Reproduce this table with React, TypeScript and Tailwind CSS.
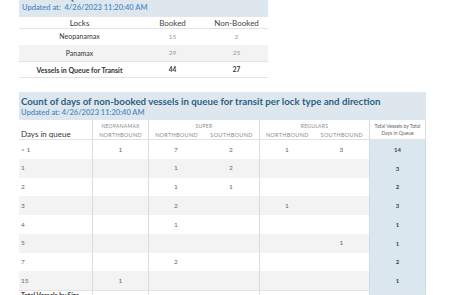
const GROUPS = [
  { label: 'NEOPANAMAX', subs: ['NORTHBOUND'] },
  { label: 'SUPER', subs: ['NORTHBOUND', 'SOUTHBOUND'] },
  { label: 'REGULARS', subs: ['NORTHBOUND', 'SOUTHBOUND'] },
];

// [days, neoNB, superNB, superSB, regNB, regSB, total]
const ROWS: (string | number | null)[][] = [
  ['< 1', 1, 7, 2, 1, 3, 14],
  ['1', null, 1, 2, null, null, 3],
  ['2', null, 1, 1, null, null, 2],
  ['3', null, 2, null, 1, null, 3],
  ['4', null, 1, null, null, null, 1],
  ['5', null, null, null, null, 1, 1],
  ['7', null, 2, null, null, null, 2],
  ['15', 1, null, null, null, null, 1],
];

const COLS = 'grid grid-cols-[73px_56px_55px_56px_55px_55px_57px]';

function LocksTable() {
  return (
    <div className="w-[249px] mt-[-12px]">
      <div className="bg-[#dfe7ee] px-[3px] pt-[2px] pb-[3px]">
        <div className="text-[9.7px] leading-[12px] font-bold text-[#2d5f84] whitespace-nowrap">
          Vessels in Queue for Transit in the Panama Canal
        </div>
        <div className="text-[7.5px] leading-[12px] font-semibold text-[#4a8cc4] whitespace-pre">
          Updated at:  4/26/2023 11:20:40 AM
        </div>
      </div>
      <div className="grid grid-cols-[121px_65px_63px] text-center">
        <div className="h-[12px] leading-[12px] text-[8px] text-[#333] border-b border-[#e3e3e3]">Locks</div>
        <div className="h-[12px] leading-[12px] text-[8px] text-[#444] border-b border-[#e3e3e3]">Booked</div>
        <div className="h-[12px] leading-[12px] text-[8px] text-[#444] border-b border-[#e3e3e3]">Non-Booked</div>

        <div className="h-[16px] leading-[15px] text-[7px] text-[#333]">Neopanamax</div>
        <div className="h-[16px] leading-[15px] text-[6.5px] text-[#999]">15</div>
        <div className="h-[16px] leading-[15px] text-[6.5px] text-[#999]">2</div>

        <div className="h-[16px] leading-[16px] text-[7px] text-[#333] bg-[#f3f3f3]">Panamax</div>
        <div className="h-[16px] leading-[16px] text-[6.5px] text-[#999] bg-[#f3f3f3]">29</div>
        <div className="h-[16px] leading-[16px] text-[6.5px] text-[#999] bg-[#f3f3f3]">25</div>

        <div className="h-[17px] leading-[16px] text-[7px] font-bold text-[#333] border-y border-[#e3e3e3]">
          Vessels in Queue for Transit
        </div>
        <div className="h-[17px] leading-[16px] text-[6.5px] font-bold text-[#333] border-y border-[#e3e3e3]">44</div>
        <div className="h-[17px] leading-[16px] text-[6.5px] font-bold text-[#333] border-y border-[#e3e3e3]">27</div>
      </div>
    </div>
  );
}

function QueueTable() {
  return (
    <div className="w-[407px] mt-[14px]">
      <div className="bg-[#dfe7ee] px-[2px] pt-[3px] pb-[1px]">
        <div className="text-[9.7px] leading-[12px] font-bold text-[#2d5f84] whitespace-nowrap">
          Count of days of non-booked vessels in queue for transit per lock type and direction
        </div>
        <div className="text-[7.5px] leading-[12px] font-semibold text-[#4a8cc4]">Updated at: 4/26/2023 11:20:40 AM</div>
      </div>

      {/* header */}
      <div className={`${COLS} h-[20px] border-b border-[#e3e3e3]`}>
        <div className="flex items-end pl-[2px] pb-[1px] text-[8px] leading-[10px] text-[#333]">Days in queue</div>
        {GROUPS.map((g, gi) => (
          <div
            key={g.label}
            className={`border-l border-[#dcdcdc] flex flex-col ${gi === 0 ? 'col-span-1' : 'col-span-2'}`}
          >
            <div className="h-[10px] leading-[12px] text-center text-[5px] tracking-[0.3px] text-[#8a8a8a]">
              {g.label}
            </div>
            <div className="flex">
              {g.subs.map((s, si) => (
                <div
                  key={si}
                  className="flex-1 h-[10px] leading-[10px] text-center text-[5.5px] tracking-[0.3px] text-[#8a8a8a]"
                >
                  {s}
                </div>
              ))}
            </div>
          </div>
        ))}
        <div className="border-x border-[#dcdcdc] flex flex-col items-center justify-center text-[5px] leading-[7px] text-[#666] text-center">
          <span>Total Vessels by Total</span>
          <span>Days in Queue</span>
        </div>
      </div>

      {/* body */}
      {ROWS.map((r, i) => (
        <div key={i} className={`${COLS} h-[18.75px]`}>
          {r.map((v, ci) => {
            const bg = ci === 6 ? 'bg-[#dbe7ee]' : i % 2 === 1 ? 'bg-[#f3f3f3]' : 'bg-white';
            const line = ci === 1 || ci === 2 || ci === 4 ? 'border-l border-[#dcdcdc]' : ci === 6 ? 'border-x border-[#cfdde6]' : '';
            return (
              <div
                key={ci}
                className={`${bg} ${line} flex items-center ${
                  ci === 0 ? 'pl-[2px] text-[#666] text-[6.5px]' : 'justify-center'
                } ${ci === 6 ? 'font-bold text-[#444] text-[6px]' : ci > 0 ? 'text-[#666] text-[6.5px]' : ''}`}
              >
                {v ?? ''}
              </div>
            );
          })}
        </div>
      ))}
      <div className={`${COLS} h-[20px] border-t border-[#e3e3e3]`}>
        <div className="pl-[2px] pt-[1px] text-[6.5px] leading-[8px] font-bold text-[#333]">Total Vessels by Size</div>
        <div className="border-l border-[#dcdcdc]" />
        <div className="border-l border-[#dcdcdc]" />
        <div />
        <div className="border-l border-[#dcdcdc]" />
        <div />
        <div className="bg-[#dbe7ee] border-x border-[#cfdde6]" />
      </div>
    </div>
  );
}

export default function App() {
  return (
    <div className="w-[460px] h-[295px] overflow-hidden bg-white pl-[19px] font-['Lato','Open_Sans',sans-serif]">
      <LocksTable />
      <QueueTable />
    </div>
  );
}
